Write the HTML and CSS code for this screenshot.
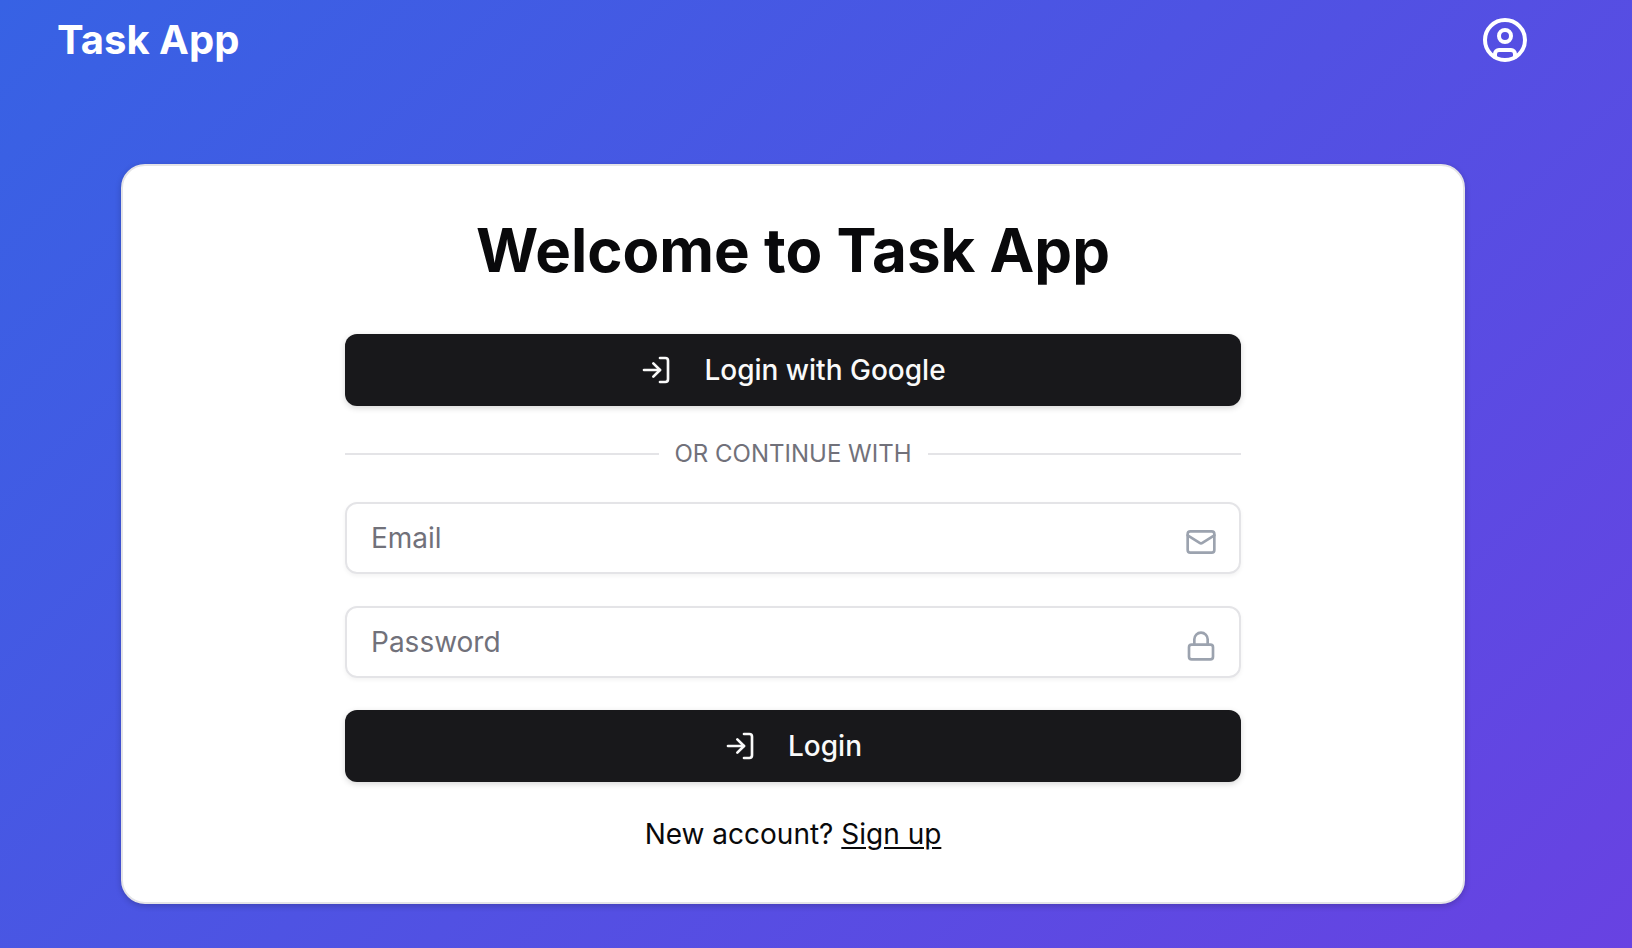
FILE: index.html
```html
<!DOCTYPE html>
<html lang="en">
<head>
  <meta charset="utf-8">
  <meta name="viewport" content="width=device-width, initial-scale=1">
  <title>Task App</title>
  <link rel="stylesheet" href="styles.css">
</head>
<body class="page">
  <header class="header">
    <a class="brand" href="#">Task App</a>
    <button class="profile" type="button" aria-label="Account">
      <svg class="profile-icon" viewBox="0 0 24 24" aria-hidden="true">
        <path d="M7 20.662V19a2 2 0 0 1 2-2h6a2 2 0 0 1 2 2v1.662"/>
        <circle cx="12" cy="10" r="3"/>
        <circle cx="12" cy="12" r="10"/>
      </svg>
    </button>
  </header>
  <main class="main">
    <section class="card">
      <h1 class="title">Welcome to Task App</h1>
      <form class="form">
        <button class="button" type="button">
          <svg class="icon" viewBox="0 0 24 24" aria-hidden="true">
            <path d="M15 3h4a2 2 0 0 1 2 2v14a2 2 0 0 1-2 2h-4"/>
            <path d="m10 17 5-5-5-5"/>
            <path d="M15 12H3"/>
          </svg>
          Login with Google
        </button>
        <div class="divider">Or continue with</div>
        <label class="field">
          <input class="input" type="email" name="email" placeholder="Email" aria-label="Email">
          <svg class="icon field-icon" viewBox="0 0 24 24" aria-hidden="true">
            <rect x="2" y="4" width="20" height="16" rx="2"/>
            <path d="m22 7-8.97 5.7a1.94 1.94 0 0 1-2.06 0L2 7"/>
          </svg>
        </label>
        <label class="field">
          <input class="input" type="password" name="password" placeholder="Password" aria-label="Password">
          <svg class="icon field-icon" viewBox="0 0 24 24" aria-hidden="true">
            <rect x="3" y="11" width="18" height="11" rx="2"/>
            <path d="M7 11V7a5 5 0 0 1 10 0v4"/>
          </svg>
        </label>
        <button class="button" type="submit">
          <svg class="icon" viewBox="0 0 24 24" aria-hidden="true">
            <path d="M15 3h4a2 2 0 0 1 2 2v14a2 2 0 0 1-2 2h-4"/>
            <path d="m10 17 5-5-5-5"/>
            <path d="M15 12H3"/>
          </svg>
          Login
        </button>
        <p class="signup">New account? <a class="link" href="#">Sign up</a></p>
      </form>
    </section>
  </main>
</body>
</html>
```
FILE: styles.css
```css
* {
  box-sizing: border-box;
}

.page {
  margin: 0;
  min-height: 100vh;
  padding-right: 46px;
  background: linear-gradient(135deg, #3762e4, #6842e2);
  color: #09090b;
  font-family: Inter, "Liberation Sans", sans-serif;
  font-size: 28px;
  line-height: 40px;
}

.header {
  display: flex;
  align-items: center;
  justify-content: space-between;
  height: 80px;
  padding: 0 57px;
}

.brand {
  color: #fff;
  font-size: 40px;
  font-weight: 700;
  line-height: 56px;
  text-decoration: none;
}

.profile {
  display: flex;
  padding: 0;
  border: 0;
  background: none;
  color: #fff;
  cursor: pointer;
}

.profile-icon,
.icon {
  flex: none;
  fill: none;
  stroke: currentColor;
  stroke-width: 2;
  stroke-linecap: round;
  stroke-linejoin: round;
}

.profile-icon {
  width: 48px;
  height: 48px;
}

.icon {
  width: 32px;
  height: 32px;
}

.main {
  padding: 84px 32px 44px;
}

.card {
  max-width: 1344px;
  margin: 0 auto;
  padding: 48px;
  border: 2px solid #e4e4e7;
  border-radius: 24px;
  background: #fff;
  box-shadow: 0 2px 6px rgb(0 0 0 / 20%);
}

.title {
  margin: 0 0 48px;
  font-size: 60px;
  font-weight: 700;
  line-height: 72px;
  text-align: center;
}

.form {
  display: flex;
  flex-direction: column;
  gap: 32px;
  max-width: 896px;
  margin: 0 auto;
}

.button {
  display: flex;
  align-items: center;
  justify-content: center;
  gap: 32px;
  height: 72px;
  padding: 0 32px;
  border: 0;
  border-radius: 12px;
  background: #18181b;
  box-shadow: 0 2px 6px rgb(0 0 0 / 16%);
  color: #fafafa;
  font: inherit;
  font-weight: 500;
  cursor: pointer;
}

.divider {
  display: flex;
  align-items: center;
  gap: 16px;
  color: #71717a;
  font-size: 24px;
  line-height: 32px;
  text-transform: uppercase;
}

.divider::before,
.divider::after {
  content: "";
  flex: 1;
  height: 2px;
  background: #e4e4e7;
}

.field {
  position: relative;
  display: block;
}

.input {
  display: block;
  width: 100%;
  height: 72px;
  padding: 0 72px 0 24px;
  border: 2px solid #e4e4e7;
  border-radius: 12px;
  background: transparent;
  box-shadow: 0 2px 4px rgb(0 0 0 / 5%);
  color: inherit;
  font: inherit;
}

.input::placeholder {
  color: #71717a;
  opacity: 1;
}

.field-icon {
  position: absolute;
  top: 24px;
  right: 24px;
  color: #9ca3af;
}

.signup {
  margin: 0;
  text-align: center;
}

.link {
  color: inherit;
  text-underline-offset: 3px;
}
```
